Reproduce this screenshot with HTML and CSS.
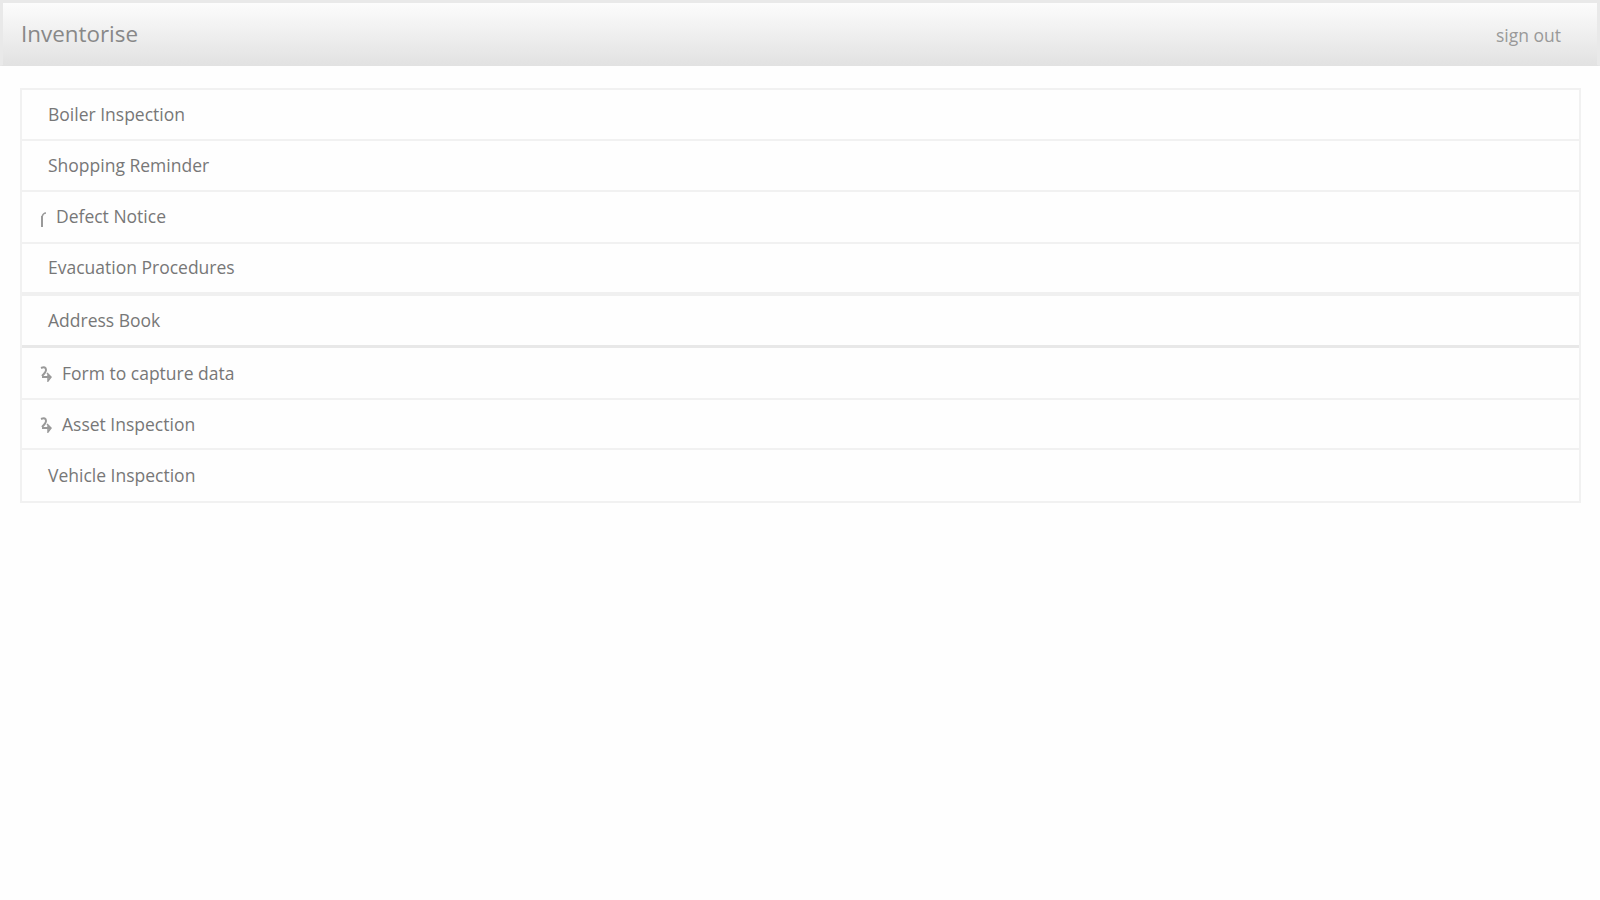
FILE: index.html
```html
<!DOCTYPE html>
<html lang="en">
<head>
    <meta charset="UTF-8" />
    <meta name="viewport" content="width=device-width, initial-scale=1.0" />
    <title>Inventorise</title>
    <link rel="stylesheet" href="styles.css">
</head>
<body>
    <header class="header">
        <h1>Inventorise</h1>
        <a class="sign-out" href="#">sign out</a>
    </header>

    <main>
        <ul class="form-list">
            <li><span class="label">Boiler Inspection</span></li>
            <li><span class="label">Shopping Reminder</span></li>
            <li class="started">
                <svg class="icon" width="10" height="22" viewBox="0 0 10 22"><path class="thin" d="M8 7Q5 7 4 11" /><path d="M4 10V21" /></svg>
                <span class="label">Defect Notice</span>
            </li>
            <li class="group-end"><span class="label">Evacuation Procedures</span></li>
            <li class="group-end-small"><span class="label">Address Book</span></li>
            <li class="sent tall">
                <svg class="icon" width="16" height="18" viewBox="0 0 16 18"><path d="M3 4Q8 2 8 6Q8 8 4 12M4 13H13" /><path class="thin" d="M9 9L13 13L10 17V10" /></svg>
                <span class="label">Form to capture data</span>
            </li>
            <li class="sent short">
                <svg class="icon" width="16" height="18" viewBox="0 0 16 18"><path d="M3 4Q8 2 8 6Q8 8 4 12M4 13H13" /><path class="thin" d="M9 9L13 13L10 17V10" /></svg>
                <span class="label">Asset Inspection</span>
            </li>
            <li><span class="label">Vehicle Inspection</span></li>
        </ul>
    </main>
</body>
</html>
```
FILE: styles.css
```css
* {
    box-sizing: border-box;
}

body {
    font-family: "Open Sans", "Noto Sans", sans-serif;
    background: #fefefe;
    margin: 0;
    color: #777;
}

.header {
    display: flex;
    align-items: center;
    justify-content: space-between;
    height: 66px;
    padding: 0 36px 0 18px;
    border: 3px solid #e9e9e9;
    border-bottom: 1px solid #e2e2e2;
    background: linear-gradient(#fcfcfc, #e2e2e2);
}

.header h1 {
    margin: 0;
    font-size: 22.4px;
    font-weight: 400;
    line-height: 30px;
    color: #888;
}

.sign-out {
    padding-top: 1px;
    font-size: 17.5px;
    color: #999;
    text-decoration: none;
}

main {
    padding: 22px 19px 0 20px;
}

.form-list {
    list-style: none;
    margin: 0;
    padding: 0;
    border: 2px solid #f1f1f1;
}

.form-list li {
    display: flex;
    align-items: center;
    height: 51px;
    padding-left: 26px;
    padding-bottom: 2px;
    border-bottom: 2px solid #f1f1f1;
    font-size: 17.5px;
}

.form-list li:last-child {
    border-bottom: none;
}

.form-list .tall {
    height: 52px;
}

.form-list .short {
    height: 50px;
}

.form-list .started {
    height: 52px;
    padding-left: 16px;
    padding-bottom: 3px;
}

.started .icon {
    margin-top: 3px;
}

.started .label {
    margin-left: 8px;
}

.form-list .sent {
    padding-left: 16px;
    padding-bottom: 1px;
}

.sent .label {
    margin-left: 8px;
}

.form-list .group-end {
    height: 52px;
    border-bottom: 4px solid #f0f0f0;
}

.form-list .group-end-small {
    height: 52px;
    border-bottom: 3px solid #e8e8e8;
}

.icon {
    fill: none;
    stroke: #999;
    stroke-width: 2;
}

.icon .thin {
    stroke-width: 1.5;
}
```
